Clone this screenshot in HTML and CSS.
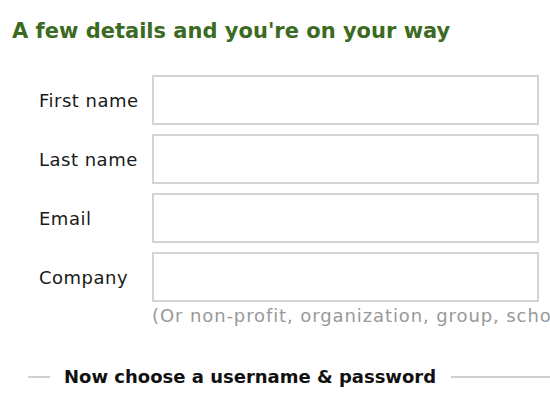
FILE: index.html
```html
<!DOCTYPE html>
<html>
<head>
<meta charset="utf-8">
<link rel="stylesheet" href="styles.css">
</head>
<body>
<div class="page">
  <h1 class="title">A few details and you're on your way</h1>
  <form class="form">
    <div class="row">
      <label class="label">First name</label>
      <input class="field" type="text">
    </div>
    <div class="row">
      <label class="label">Last name</label>
      <input class="field" type="text">
    </div>
    <div class="row">
      <label class="label">Email</label>
      <input class="field" type="text">
    </div>
    <div class="row">
      <label class="label">Company</label>
      <input class="field" type="text">
    </div>
    <div class="hint">(Or non-profit, organization, group, school, etc.)</div>
  </form>
  <div class="divider">
    <span class="line short"></span>
    <span class="divider-text">Now choose a username &amp; password</span>
    <span class="line long"></span>
  </div>
</div>
</body>
</html>
```
FILE: styles.css
```css
html, body {
  margin: 0;
  padding: 0;
  background: #fff;
  overflow: hidden;
}
.page {
  width: 550px;
  height: 413px;
  overflow: hidden;
  font-family: "DejaVu Sans", Verdana, sans-serif;
}
.title {
  margin: 0;
  padding: 18px 0 0 12px;
  font-size: 21px;
  font-weight: bold;
  color: #3b6b22;
  line-height: 26px;
  white-space: nowrap;
}
.form {
  margin-top: 31px;
  display: flex;
  flex-direction: column;
  gap: 9px;
}
.row {
  display: flex;
  align-items: center;
}
.label {
  width: 113px;
  padding-left: 39px;
  font-size: 18px;
  letter-spacing: 0.5px;
  color: #1a1a1a;
  white-space: nowrap;
}
.field {
  box-sizing: border-box;
  width: 387px;
  height: 50px;
  margin: 0;
  border: 2px solid #d4d4d4;
  background: #fff;
  outline: none;
}
.hint {
  margin-top: -6px;
  padding-left: 152px;
  font-size: 18px;
  letter-spacing: 0.9px;
  color: #999;
  white-space: nowrap;
}
.divider {
  margin-top: 40px;
  display: flex;
  align-items: center;
  white-space: nowrap;
}
.line {
  height: 2px;
  background: #d0d0d0;
  flex: none;
}
.short {
  width: 22px;
  margin-left: 28px;
}
.long {
  flex: 1;
}
.divider-text {
  padding: 0 15px 0 14px;
  font-size: 18px;
  font-weight: bold;
  color: #111;
}
```
